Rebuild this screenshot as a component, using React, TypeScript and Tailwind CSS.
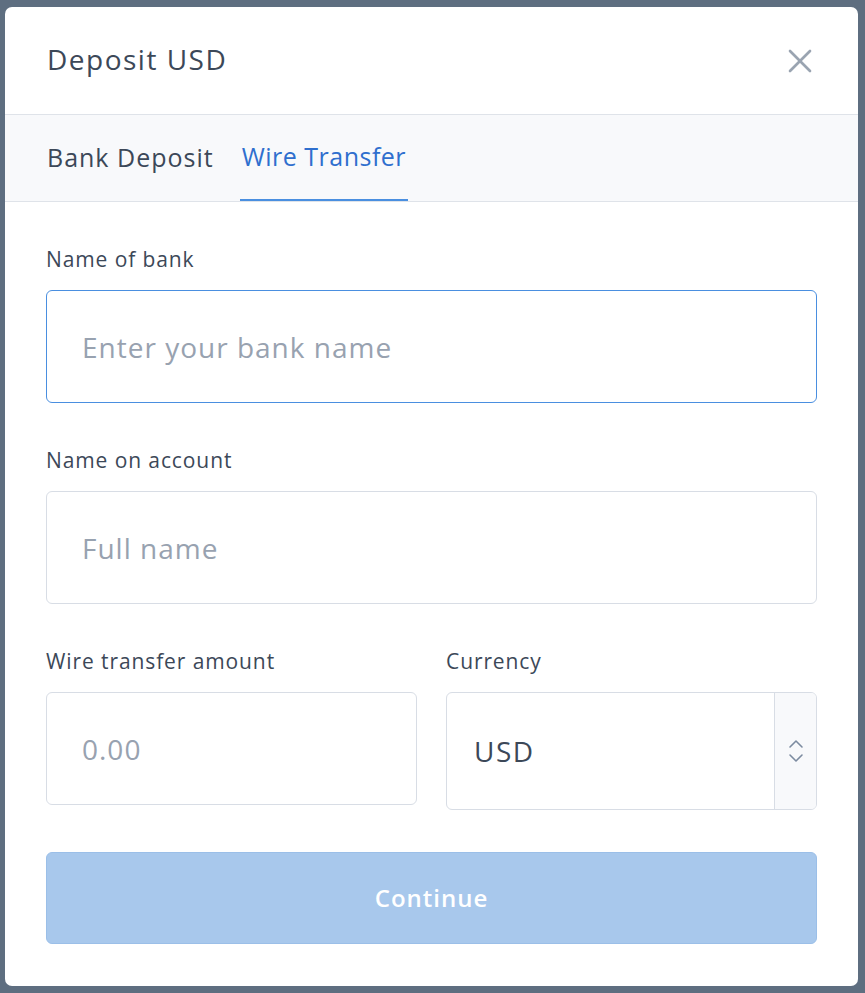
import React from "react";
import { X } from "lucide-react";

const font = { fontFamily: '"Open Sans", "Noto Sans", sans-serif' };

function Field({ label, placeholder, focused }: { label: string; placeholder: string; focused?: boolean }) {
  return (
    <div className="flex flex-col">
      <label className="text-[21px] tracking-[0.9px] leading-[28px] text-[#3c4858] mb-[17px]">{label}</label>
      <input
        placeholder={placeholder}
        className={`h-[113px] w-full rounded-[6px] border px-[35px] text-[28px] tracking-[1px] text-[#3c4858] placeholder:text-[#98a2b0] outline-none ${
          focused ? "border-[#4a8fe0]" : "border-[#d8dde5]"
        }`}
      />
    </div>
  );
}

export default function App() {
  return (
    <div className="min-h-[993px] bg-[#5e6e80] pl-[5px] pr-[7px] pt-[7px] pb-[8px]" style={font}>
      <div className="bg-white rounded-[7px] overflow-hidden">
        {/* header */}
        <div className="h-[108px] flex items-center justify-between pl-[42px] pr-[38px] border-b border-[#dfe3e9]">
          <h2 className="text-[28px] tracking-[1.5px] text-[#3c4858] pb-[4px]">Deposit USD</h2>
          <X className="w-[40px] h-[40px] text-[#9aa4b1]" strokeWidth={1.6} />
        </div>

        {/* tabs */}
        <div className="h-[87px] bg-[#f8f9fb] border-b border-[#dfe3e9] flex pl-[42px] gap-[26px]">
          <button className="h-full text-[25px] tracking-[1px] text-[#3c4858] flex items-center">Bank Deposit</button>
          <button className="h-full px-[2px] text-[25px] tracking-[0.5px] text-[#2f6fce] flex items-center border-b-2 border-[#4a8fe0] -mb-px">
            Wire Transfer
          </button>
        </div>

        {/* form */}
        <div className="px-[41px] pt-[43px] pb-[42px] flex flex-col gap-[43px]">
          <Field label="Name of bank" placeholder="Enter your bank name" focused />
          <Field label="Name on account" placeholder="Full name" />

          <div className="grid grid-cols-2 gap-[29px]">
            <div className="flex flex-col">
              <label className="text-[21px] tracking-[0.9px] leading-[28px] text-[#3c4858] mb-[17px]">Wire transfer amount</label>
              <input
                placeholder="0.00"
                className="h-[113px] w-full rounded-[6px] border border-[#d8dde5] px-[35px] text-[28px] tracking-[1px] text-[#3c4858] placeholder:text-[#98a2b0] outline-none"
              />
            </div>
            <div className="flex flex-col">
              <label className="text-[21px] tracking-[0.9px] leading-[28px] text-[#3c4858] mb-[17px]">Currency</label>
              <div className="h-[118px] flex rounded-[6px] border border-[#d8dde5] overflow-hidden">
                <div className="flex-1 flex items-center pl-[27px] text-[28px] tracking-[1.5px] text-[#3c4858]">USD</div>
                <div className="w-[42px] bg-[#f8f9fb] border-l border-[#d8dde5] flex flex-col items-center justify-center">
                  <svg width="16" height="26" viewBox="0 0 16 26" fill="none" stroke="#7c8ba0" strokeWidth="1.6" strokeLinecap="round" strokeLinejoin="round">
                    <path d="M2 9 L8 3 L14 9" />
                    <path d="M2 17 L8 23 L14 17" />
                  </svg>
                </div>
              </div>
            </div>
          </div>

          <button className="h-[92px] -mt-[1px] rounded-[6px] border border-[#9bbfe8] bg-[#a8c8ec] text-white text-[24px] tracking-[1px] font-semibold">
            Continue
          </button>
        </div>
      </div>
    </div>
  );
}
